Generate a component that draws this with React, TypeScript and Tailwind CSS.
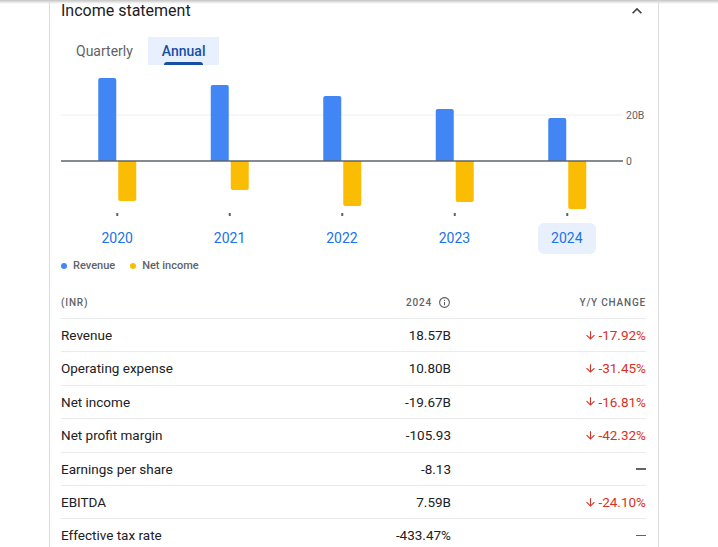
import { ReactNode } from 'react';

type Bar = { year: string; top: number; bottom: number };

const BASE = 96;
const BAR_W = 18;
const COL_W = 112.5;

const bars: Bar[] = [
  { year: '2020', top: 13, bottom: 136 },
  { year: '2021', top: 20, bottom: 125 },
  { year: '2022', top: 31, bottom: 141 },
  { year: '2023', top: 44, bottom: 137 },
  { year: '2024', top: 53, bottom: 144 }
];

type Row = { label: string; value: string; change: string | null };

const rows: Row[] = [
  { label: 'Revenue', value: '18.57B', change: '-17.92%' },
  { label: 'Operating expense', value: '10.80B', change: '-31.45%' },
  { label: 'Net income', value: '-19.67B', change: '-16.81%' },
  { label: 'Net profit margin', value: '-105.93', change: '-42.32%' },
  { label: 'Earnings per share', value: '-8.13', change: null },
  { label: 'EBITDA', value: '7.59B', change: '-24.10%' },
  { label: 'Effective tax rate', value: '-433.47%', change: null }
];

function upBar(x: number, top: number, r = 2) {
  return `M${x},${BASE} V${top + r} Q${x},${top} ${x + r},${top} H${x + BAR_W - r} Q${x + BAR_W},${top} ${x + BAR_W},${top + r} V${BASE} Z`;
}

function downBar(x: number, bottom: number, r = 2) {
  return `M${x},${BASE} V${bottom - r} Q${x},${bottom} ${x + r},${bottom} H${x + BAR_W - r} Q${x + BAR_W},${bottom} ${x + BAR_W},${bottom - r} V${BASE} Z`;
}

function Chart() {
  return (
    <svg width={590} height={157} className="block">
      <line x1={0} x2={562} y1={50} y2={50} stroke="#eeeff1" strokeWidth={1} />
      {bars.map((b, i) => {
        const c = COL_W / 2 + COL_W * i;
        return (
          <g key={b.year}>
            <path d={upBar(c - 19, b.top)} fill="#4285f4" />
            <path d={downBar(c + 1, b.bottom)} fill="#fbbc04" />
            <rect x={c - 1} y={148} width={2} height={3} fill="#5f6368" />
          </g>
        );
      })}
      <line x1={0} x2={562} y1={BASE} y2={BASE} stroke="#5f6368" strokeWidth={1.5} />
      <text x={565} y={54} fontSize={10.5} fill="#5f6368" fontFamily="Roboto, sans-serif">
        20B
      </text>
      <text x={565} y={100} fontSize={10.5} fill="#5f6368" fontFamily="Roboto, sans-serif">
        0
      </text>
    </svg>
  );
}

function ArrowDown() {
  return (
    <svg width={13} height={13} viewBox="0 0 24 24" fill="#d93025">
      <path d="M20 12l-1.41-1.41L13 16.17V4h-2v12.17l-5.58-5.59L4 12l8 8 8-8z" />
    </svg>
  );
}

function InfoIcon() {
  return (
    <svg width={13} height={13} viewBox="0 0 24 24" fill="#5f6368">
      <path d="M11 7h2v2h-2zm0 4h2v6h-2zm1-9C6.48 2 2 6.48 2 12s4.48 10 10 10 10-4.48 10-10S17.52 2 12 2zm0 18c-4.41 0-8-3.59-8-8s3.59-8 8-8 8 3.59 8 8-3.59 8-8 8z" />
    </svg>
  );
}

function TableRow({ children }: { children: ReactNode }) {
  return (
    <div className="grid h-[33.4px] grid-cols-[1fr_140px_195px] items-center border-t border-[#e8eaed]">
      {children}
    </div>
  );
}

export default function App() {
  return (
    <div
      className="relative h-[547px] w-[718px] overflow-hidden bg-white text-[#202124]"
      style={{ fontFamily: 'Roboto, "Open Sans", Arial, sans-serif' }}
    >
      <div className="pointer-events-none absolute inset-x-0 top-0 h-[4px] bg-gradient-to-b from-[#c4c4c4] via-[#e2e2e2] to-transparent" />

      <div className="ml-[49px] h-full w-[610px] border-x border-[#dadce0] pl-[11px] pr-[12px]">
        <div className="flex h-[22px] items-center justify-between">
          <h2 className="text-[16px] leading-none">Income statement</h2>
          <svg width={20} height={20} viewBox="0 0 24 24" fill="#3c4043" className="mr-[-1px]">
            <path d="M12 8l-6 6 1.41 1.41L12 10.83l4.59 4.58L18 14z" />
          </svg>
        </div>

        <div className="mt-[15px] flex h-[28px] text-[14px]">
          <div className="flex items-center px-[15px] text-[#5f6368]">Quarterly</div>
          <div className="relative flex items-center bg-[#e8f0fe] px-[14px] font-medium text-[#174ea6]">
            Annual
            <span className="absolute inset-x-[16px] bottom-0 h-[3px] rounded-t-sm bg-[#174ea6]" />
          </div>
        </div>

        <Chart />

        <div className="mt-[1px] grid w-[562px] grid-cols-5">
          {bars.map((b, i) => (
            <div key={b.year} className="flex justify-center">
              <div
                className={
                  i === bars.length - 1
                    ? 'flex h-[31px] w-[58px] items-center justify-center rounded-md bg-[#e8f0fe] text-[14px] text-[#1a73e8]'
                    : 'flex h-[31px] w-[58px] items-center justify-center text-[14px] text-[#1a73e8]'
                }
              >
                {b.year}
              </div>
            </div>
          ))}
        </div>

        <div className="mt-[5px] flex h-[14px] items-center text-[11px] font-medium text-[#5f6368]">
          <span className="h-[6px] w-[6px] rounded-full bg-[#4285f4]" />
          <span className="ml-[6px]">Revenue</span>
          <span className="ml-[15px] h-[6px] w-[6px] rounded-full bg-[#fbbc04]" />
          <span className="ml-[6px]">Net income</span>
        </div>

        <div className="mt-[13px] grid h-[32px] grid-cols-[1fr_140px_195px] items-center text-[10px] font-medium uppercase tracking-[0.08em] text-[#5f6368]">
          <div>(INR)</div>
          <div className="flex items-center justify-end gap-[6px]">
            2024
            <InfoIcon />
          </div>
          <div className="text-right">Y/Y change</div>
        </div>

        {rows.map((row) => (
          <TableRow key={row.label}>
            <div className="text-[13.5px]">{row.label}</div>
            <div className="text-right text-[13.5px]">{row.value}</div>
            <div className="flex items-center justify-end text-[13.5px]">
              {row.change ? (
                <span className="flex items-center gap-[1px] text-[#d93025]">
                  <ArrowDown />
                  {row.change}
                </span>
              ) : (
                <span className="block h-[1.5px] w-[10px] bg-[#5f6368]" />
              )}
            </div>
          </TableRow>
        ))}
      </div>
    </div>
  );
}
